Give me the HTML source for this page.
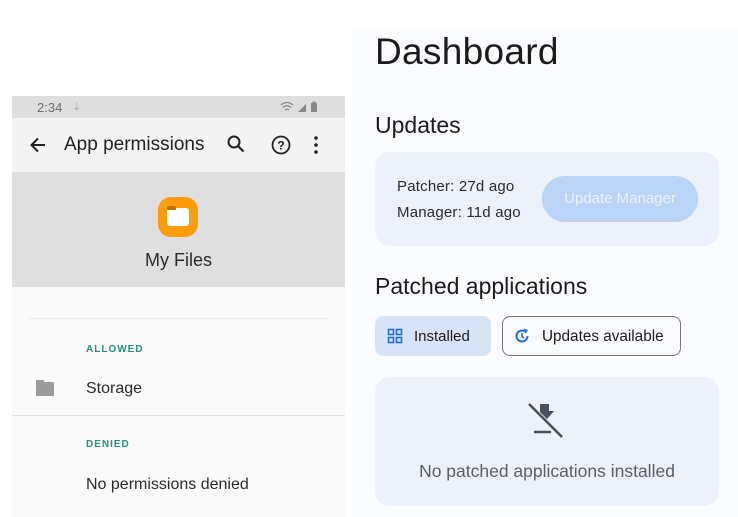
<!DOCTYPE html>
<html><head><meta charset="utf-8"><style>
*{margin:0;padding:0;box-sizing:border-box}
body{width:738px;height:517px;background:#fff;position:relative;overflow:hidden;font-family:"Liberation Sans",Roboto,sans-serif}
.a{position:absolute}
</style></head><body>
<!-- Left phone -->
<div class="a" style="left:12px;top:96px;width:333px;height:421px;background:#fafafa"></div>
<div class="a" style="left:12px;top:96px;width:333px;height:22px;background:#dedede"></div>
<div class="a" style="left:37px;top:100px;font-size:13px;color:#6e6e6e">2:34</div>
<div class="a" style="left:72px;top:100px;font-size:11px;color:#aaa">⇣</div>
<svg class="a" style="left:280px;top:100px" width="42" height="14" viewBox="0 0 42 14">
<path d="M1 5 Q7 0 13 5 M3 7.5 Q7 4 11 7.5 M5 10 Q7 8.5 9 10" stroke="#888" stroke-width="1.3" fill="none"/>
<path d="M18 12 L26 4 L26 12Z" fill="#888"/><rect x="31" y="3" width="6" height="9" fill="#888"/><rect x="32.5" y="1.5" width="3" height="2" fill="#888"/>
</svg>
<div class="a" style="left:12px;top:118px;width:333px;height:54px;background:#f3f3f3"></div>
<svg class="a" style="left:28px;top:135px" width="20" height="20" viewBox="0 0 20 20"><path d="M17 10H4M10 3.5L3.5 10L10 16.5" stroke="#222" stroke-width="2" fill="none"/></svg>
<div class="a" style="left:64px;top:134px;font-size:19px;color:#222">App permissions</div>
<svg class="a" style="left:226px;top:134px" width="20" height="20" viewBox="0 0 20 20"><circle cx="8" cy="8" r="5.5" stroke="#222" stroke-width="2" fill="none"/><path d="M12 12L17.5 17.5" stroke="#222" stroke-width="2.2"/></svg>
<svg class="a" style="left:270px;top:134px" width="22" height="22" viewBox="0 0 22 22"><circle cx="11" cy="11" r="8.5" stroke="#222" stroke-width="1.8" fill="none"/><text x="11" y="15.5" text-anchor="middle" font-size="12" font-family="Liberation Sans" fill="#222" font-weight="bold">?</text></svg>
<svg class="a" style="left:312px;top:135px" width="8" height="20" viewBox="0 0 8 20"><circle cx="4" cy="3" r="1.8" fill="#222"/><circle cx="4" cy="10" r="1.8" fill="#222"/><circle cx="4" cy="17" r="1.8" fill="#222"/></svg>
<div class="a" style="left:12px;top:172px;width:333px;height:115px;background:#dfdfdf"></div>
<div class="a" style="left:158px;top:197px;width:40px;height:40px;border-radius:13px;background:#fb9d0a"></div>
<div class="a" style="left:167px;top:208px;width:22px;height:18px;border-radius:3px;background:#fff"></div>
<div class="a" style="left:167px;top:206px;width:9px;height:4px;border-radius:2px 2px 0 0;background:#c66f00"></div>
<div class="a" style="left:145px;top:250px;font-size:18px;color:#2a2a2a">My Files</div>
<div class="a" style="left:28px;top:318px;width:300px;height:1px;background:#eaeaea"></div>
<div class="a" style="left:86px;top:344px;font-size:10px;font-weight:bold;color:#27917f;letter-spacing:1px">ALLOWED</div>
<div class="a" style="left:36px;top:382px;width:18px;height:14px;background:#9b9b9b;border-radius:1px"></div>
<div class="a" style="left:36px;top:380px;width:8px;height:4px;background:#9b9b9b;border-radius:1px 1px 0 0"></div>
<div class="a" style="left:86px;top:380px;font-size:16px;color:#2a2a2a">Storage</div>
<div class="a" style="left:12px;top:415px;width:333px;height:1px;background:#e0e0e0"></div>
<div class="a" style="left:86px;top:439px;font-size:10px;font-weight:bold;color:#27917f;letter-spacing:1px">DENIED</div>
<div class="a" style="left:86px;top:476px;font-size:16px;color:#2a2a2a">No permissions denied</div>
<!-- Right -->
<div class="a" style="left:352px;top:28px;width:386px;height:489px;background:#fbfcff"></div>
<div class="a" style="left:375px;top:31px;font-size:37px;color:#1b1b1f;letter-spacing:0.3px">Dashboard</div>
<div class="a" style="left:375px;top:112px;font-size:23px;color:#1b1b1f">Updates</div>
<div class="a" style="left:375px;top:152px;width:344px;height:94px;border-radius:15px;background:#edf1fb"></div>
<div class="a" style="left:397px;top:178px;font-size:15px;color:#2a2a2e;letter-spacing:0.2px">Patcher: 27d ago</div>
<div class="a" style="left:397px;top:204px;font-size:15px;color:#2a2a2e;letter-spacing:0.2px">Manager: 11d ago</div>
<div class="a" style="left:542px;top:176px;width:156px;height:46px;border-radius:23px;background:#b9d4f6;color:#e9f1fc;font-size:15px;text-align:center;line-height:46px">Update Manager</div>
<div class="a" style="left:375px;top:273px;font-size:23px;color:#1b1b1f">Patched applications</div>
<div class="a" style="left:375px;top:316px;width:116px;height:40px;border-radius:8px;background:#d7e4f6"></div>
<svg class="a" style="left:387px;top:328px" width="16" height="16" viewBox="0 0 16 16" fill="none" stroke="#1f6fd8" stroke-width="1.6"><rect x="1.5" y="1.5" width="5" height="5"/><rect x="9.5" y="1.5" width="5" height="5"/><rect x="1.5" y="9.5" width="5" height="5"/><rect x="9.5" y="9.5" width="5" height="5"/></svg>
<div class="a" style="left:414px;top:328px;font-size:15px;color:#1b1b1f">Installed</div>
<div class="a" style="left:502px;top:316px;width:179px;height:40px;border-radius:8px;border:1.3px solid #777"></div>
<svg class="a" style="left:513px;top:327px" width="18" height="18" viewBox="0 0 18 18"><path d="M14.5 9A5.5 5.5 0 1 1 12 4.4" stroke="#1f6fd8" stroke-width="2" fill="none"/><path d="M10.5 1.5L15 3L12.5 7Z" fill="#1f6fd8"/><path d="M9 6V9.5L11 11" stroke="#1f6fd8" stroke-width="1.6" fill="none"/></svg>
<div class="a" style="left:542px;top:328px;font-size:15.3px;color:#1b1b1f">Updates available</div>
<div class="a" style="left:375px;top:377px;width:344px;height:129px;border-radius:15px;background:#edf1fb"></div>
<svg class="a" style="left:525px;top:400px" width="42" height="42" viewBox="0 0 42 42"><path d="M4 4L37 37" stroke="#4a5060" stroke-width="2.6"/><path d="M15 4H24V11H29L22 19L15 12Z" fill="#4a5060"/><path d="M9 32H26" stroke="#4a5060" stroke-width="2.6"/></svg>
<div class="a" style="left:375px;top:461px;width:344px;text-align:center;font-size:17.5px;color:#5a5e66">No patched applications installed</div>
</body></html>
